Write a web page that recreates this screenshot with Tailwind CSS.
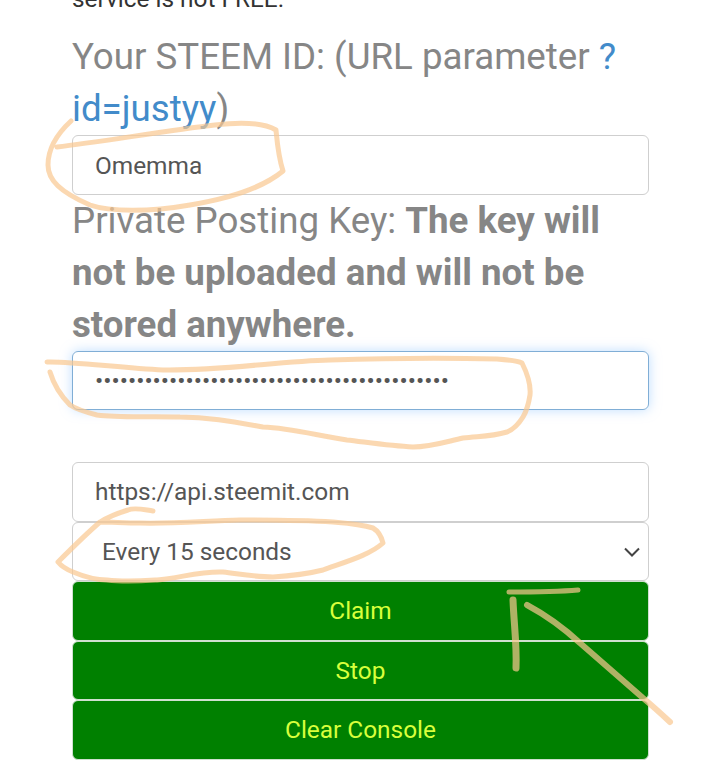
<!DOCTYPE html>
<html>
<head>
<meta charset="utf-8">
<title>Steem claim</title>
<script src="https://cdn.jsdelivr.net/npm/@tailwindcss/browser@4"></script>
</head>
<body class="bg-white">
<div class="relative w-[720px] h-[777px] overflow-hidden font-['Roboto',sans-serif]">
  <div class="pl-[72px] pr-[71px]">
    <p class="-mt-[19px] mb-[14px] text-[24.4px] leading-[36px] text-[#333]">service is not FREE.</p>

    <label class="block text-[36.7px] leading-[52px] text-[#868686]">Your STEEM ID: (URL parameter <a class="text-[#428bca]">?id=justyy</a>)</label>
    <input type="text" value="Omemma" class="block w-full h-[60px] px-[22px] border border-[#cfcfcf] rounded-[6px] text-[24.4px] text-[#555]">

    <label class="block text-[36.7px] leading-[52px] text-[#868686]">Private Posting Key: <b>The key will not be uploaded and will not be stored anywhere.</b></label>
    <input type="password" value="abcdefghijklmnopqrstuvwxyzabcdefghijklmnopq" class="block w-full h-[59px] px-[22px] border border-[#80aed6] rounded-[6px] text-[24.4px] text-[#555] shadow-[0_0_12px_rgba(128,189,255,0.5)] outline-none">

    <input type="text" value="https://api.steemit.com" class="block w-full h-[60px] mt-[52px] px-[22px] pb-[2px] border border-[#cfcfcf] rounded-[6px] text-[24.4px] text-[#555]">
    <div class="flex items-center justify-between h-[59px] pl-[29px] pr-[8px] border border-[#cfcfcf] rounded-[6px] text-[24.4px] text-[#555]">
      <span class="pt-[2px]">Every 15 seconds</span>
      <svg width="16" height="10" viewBox="0 0 16 10" fill="none" stroke="#444" stroke-width="2"><path d="M1 1.5l7 7 7-7"/></svg>
    </div>

    <button class="block w-full h-[60px] bg-[#008000] border border-[#cfe0cf] rounded-[6px] text-[24.4px] text-[#d8ff3c]">Claim</button>
    <button class="block w-full h-[59px] pt-[2px] bg-[#008000] border border-[#cfe0cf] rounded-[6px] text-[24.4px] text-[#d8ff3c]">Stop</button>
    <button class="block w-full h-[60px] bg-[#008000] border border-[#cfe0cf] rounded-[6px] text-[24.4px] text-[#d8ff3c]">Clear Console</button>
  </div>

  <!-- hand drawn marks on top of the screenshot -->
  <svg class="absolute inset-0 pointer-events-none" width="720" height="777" viewBox="0 0 720 777" fill="none" stroke="#f9c890" stroke-opacity="0.7" stroke-width="5" stroke-linecap="round" stroke-linejoin="round">
    <path d="M71 121C58 133 48 148 48 165C48 180 60 192 90 205C110 212 150 212 190 205C225 199 260 190 283 171C278 155 277 140 276 130C262 122 240 122 215 125C170 130 100 142 57 147"/>
    <path d="M47 362C70 361 120 368 163 370C220 371 280 361 330 360C390 358 460 358 497 359C510 360 518 361 522 363C528 375 531 385 530 395C528 408 526 412 523 417C518 425 512 430 507 432C490 437 478 436 463 438C445 442 430 447 413 447C390 446 365 442 347 440C315 435 290 428 263 427C235 422 210 417 180 417C150 416 120 418 97 415C85 412 76 409 70 405C60 395 53 382 50 372"/>
    <path d="M153 511C145 510 135 507 128 510C118 513 108 517 100 522C85 535 70 550 58 562C62 567 68 570 73 572C85 577 95 580 107 580C125 582 140 581 157 580C180 578 200 571 223 572C240 574 255 577 273 577C290 576 307 574 323 570C345 562 370 555 383 543C381 535 378 531 373 528C360 524 345 523 333 522C300 520 270 520 240 520C205 521 170 524 140 523C125 523 112 522 100 522"/>
    <path d="M509 592C530 592 555 592 578 590"/>
    <path stroke-width="7" d="M513 600C514 625 517 645 516 668"/>
    <path stroke-width="6" d="M527 605Q555 620 580 643L643 698Q655 708 670 722"/>
  </svg>
</div>
</body>
</html>
